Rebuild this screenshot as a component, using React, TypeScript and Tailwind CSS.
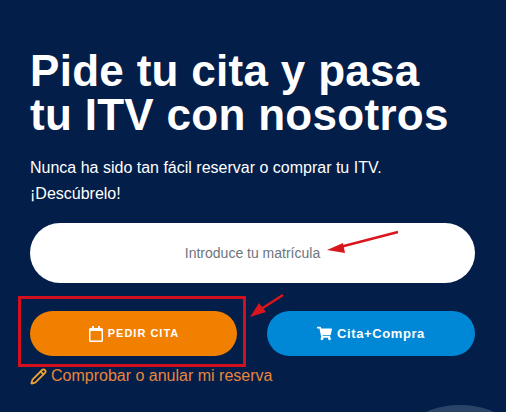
import { Pencil } from "lucide-react";
import { FaRegCalendar, FaShoppingCart } from "react-icons/fa";

export default function App() {
  return (
    <main className="relative w-[506px] h-[412px] overflow-hidden bg-[#031e49] pl-[30px] pr-[31px] pt-[49px] font-['Liberation_Sans',Arial,sans-serif]">
      <h1 className="text-[44px] leading-[44px] font-bold text-white tracking-[0.3px] whitespace-nowrap">
        Pide tu cita y pasa
        <br />
        tu ITV con nosotros
      </h1>
      <p className="mt-[18px] text-base leading-[26px] text-white">
        Nunca ha sido tan fácil reservar o comprar tu ITV.
        <br />
        ¡Descúbrelo!
      </p>

      <div className="mt-[16px] h-[60px] rounded-[30px] bg-white flex items-center justify-center text-sm text-[#6c757d]">
        Introduce tu matrícula
      </div>

      <div className="mt-[28px] flex gap-[30px]">
        <button className="w-[207px] h-[45px] rounded-[23px] bg-[#f28000] flex items-center justify-center gap-[4px] text-white text-[11px] font-bold tracking-[1px]">
          <FaRegCalendar size={16} />
          PEDIR CITA
        </button>
        <button className="w-[208px] h-[45px] rounded-[23px] bg-[#0088d6] flex items-center justify-center gap-[5px] text-white text-[13px] font-bold tracking-[0.6px]">
          <FaShoppingCart size={15} />
          Cita+Compra
        </button>
      </div>

      <a className="mt-[10px] flex items-center gap-[4px] text-base leading-[20px] text-[#e8863c]">
        <Pencil size={17} strokeWidth={2.5} className="text-[#eda331]" />
        Comprobar o anular mi reserva
      </a>

      <div className="absolute left-[18px] top-[296px] w-[228px] h-[71px] border-[3px] border-[#d2101e]" />
      <svg className="absolute left-0 top-0" width="506" height="412" viewBox="0 0 506 412" fill="none">
        <path d="M398 232 L340 247" stroke="#d9161e" strokeWidth="2.5" />
        <path d="M327 250 L343 243 L345 253 Z" fill="#d9161e" />
        <path d="M283 295 L258 311" stroke="#d9161e" strokeWidth="2.5" />
        <path d="M250 317 L259 303 L266 312 Z" fill="#d9161e" />
      </svg>
      <div className="absolute left-[420px] top-[405px] w-[80px] h-[30px] rounded-[50%] bg-[#2a4468]" />
    </main>
  );
}
